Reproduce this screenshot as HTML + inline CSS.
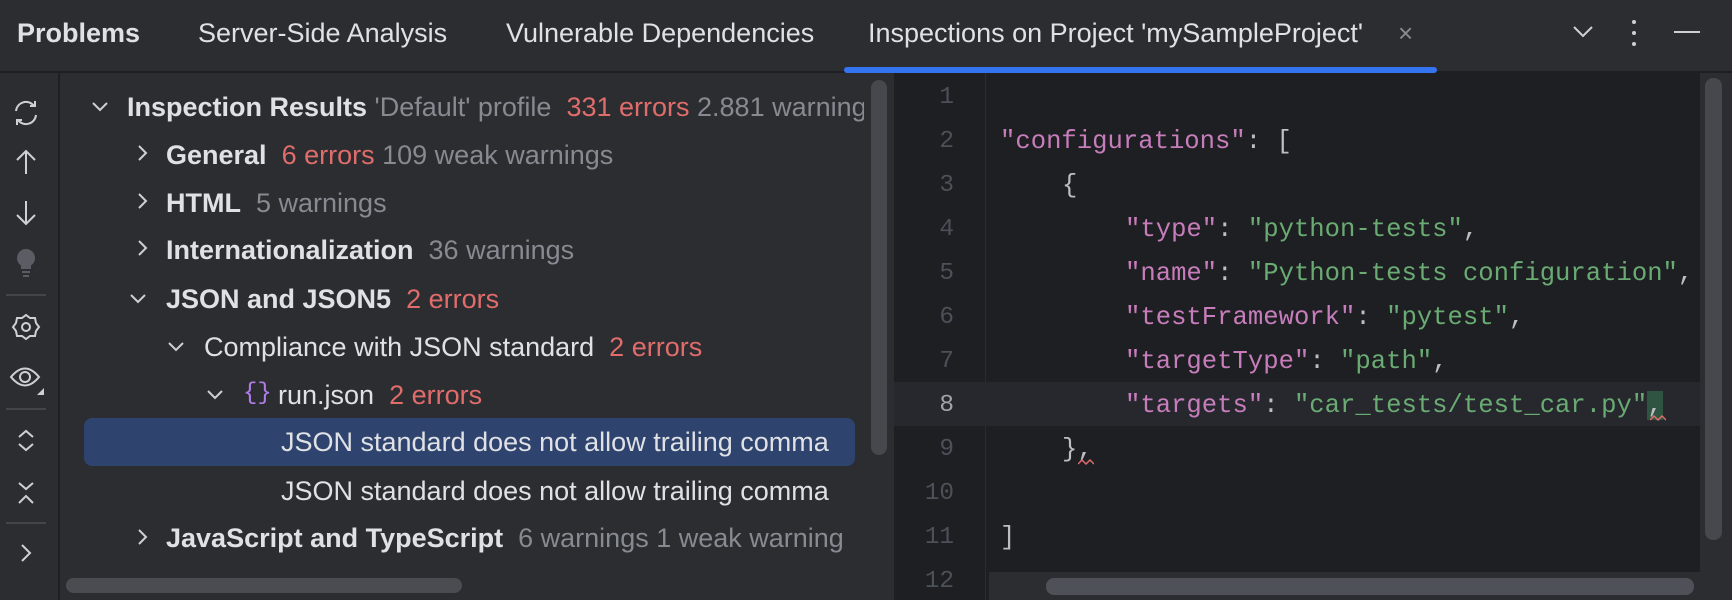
<!DOCTYPE html>
<html><head><meta charset="utf-8"><style>
*{margin:0;padding:0;box-sizing:border-box}
body{width:1732px;height:600px;background:#2b2d30;position:relative;overflow:hidden;font-family:"Liberation Sans",sans-serif;font-size:27px;color:#dfe1e5}
.a{position:absolute;white-space:nowrap}
.tab{top:16px;line-height:34px}
.row{line-height:34px}
.b{font-weight:bold}
.g{color:#868a91}
.r{color:#e06c6c}
.code{font-family:"Liberation Mono",monospace;font-size:25.6px;line-height:34px;color:#bcbec4}
.k{color:#c77dbb}
.s{color:#6aab73}
.ln{font-family:"Liberation Mono",monospace;font-size:24.4px;line-height:34px;color:#4b5059;width:60px;text-align:right;left:894px}
svg{position:absolute}
</style></head><body>
<!-- tab bar -->
<div class="a tab b" style="left:17px">Problems</div>
<div class="a tab" style="left:198px">Server-Side Analysis</div>
<div class="a tab" style="left:506px">Vulnerable Dependencies</div>
<div class="a tab" style="left:868px">Inspections on Project 'mySampleProject'</div>
<div class="a" style="left:1398px;top:16px;line-height:34px;color:#868a91;font-size:26px">×</div>
<svg style="left:1572px;top:24px" width="22" height="16"><path d="M2 3 L11 12 L20 3" stroke="#ced0d6" stroke-width="2" fill="none"/></svg>
<div class="a" style="left:1632px;top:20px;width:4px;height:4px;border-radius:2px;background:#ced0d6"></div>
<div class="a" style="left:1632px;top:31px;width:4px;height:4px;border-radius:2px;background:#ced0d6"></div>
<div class="a" style="left:1632px;top:42px;width:4px;height:4px;border-radius:2px;background:#ced0d6"></div>
<div class="a" style="left:1674px;top:31px;width:26px;height:2px;background:#ced0d6"></div>
<div class="a" style="left:0;top:71px;width:1732px;height:2px;background:#1e1f22"></div>
<div class="a" style="left:844px;top:67px;width:593px;height:6px;border-radius:3px;background:#3574f0"></div>

<!-- left toolbar -->
<div class="a" style="left:58px;top:73px;width:2px;height:527px;background:#1e1f22"></div>
<svg style="left:10px;top:97px" width="32" height="32" fill="none" stroke="#ced0d6" stroke-width="2"><path d="M6 14 A10 10 0 0 1 24 9"/><path d="M20 9 L25 9 L25 4"/><path d="M26 18 A10 10 0 0 1 8 23"/><path d="M12 23 L7 23 L7 28"/></svg>
<svg style="left:14px;top:148px" width="24" height="28" fill="none" stroke="#ced0d6" stroke-width="2"><path d="M12 26 L12 3 M3 12 L12 3 L21 12"/></svg>
<svg style="left:14px;top:199px" width="24" height="28" fill="none" stroke="#ced0d6" stroke-width="2"><path d="M12 2 L12 25 M3 16 L12 25 L21 16"/></svg>
<svg style="left:14px;top:248px" width="24" height="30"><circle cx="12" cy="10" r="9" fill="#5a5d63"/><rect x="7" y="17" width="10" height="4" fill="#5a5d63"/><rect x="8" y="23" width="8" height="2" fill="#5a5d63"/><rect x="9" y="27" width="6" height="2" fill="#5a5d63"/></svg>
<div class="a" style="left:6px;top:294px;width:40px;height:2px;background:#43454a"></div>
<svg style="left:11px;top:312px" width="30" height="30" fill="none" stroke="#ced0d6" stroke-width="2"><path d="M15 3 L19 6 L24 6 L25 11 L28 15 L25 19 L24 24 L19 24 L15 27 L11 24 L6 24 L5 19 L2 15 L5 11 L6 6 L11 6 Z"/><circle cx="15" cy="15" r="4"/></svg>
<svg style="left:9px;top:364px" width="36" height="32" fill="none" stroke="#ced0d6" stroke-width="2"><path d="M2 13 Q16 -4 30 13 Q16 30 2 13 Z"/><circle cx="16" cy="13" r="5"/><path d="M35 24 L35 31 L28 31 Z" fill="#ced0d6" stroke="none"/></svg>
<div class="a" style="left:6px;top:408px;width:40px;height:2px;background:#43454a"></div>
<svg style="left:16px;top:428px" width="20" height="26" fill="none" stroke="#ced0d6" stroke-width="2"><path d="M3 9 L10 3 L17 9 M3 16 L10 22 L17 16"/></svg>
<svg style="left:16px;top:480px" width="20" height="26" fill="none" stroke="#ced0d6" stroke-width="2"><path d="M3 3 L10 9 L17 3 M3 23 L10 16 L17 23"/></svg>
<div class="a" style="left:6px;top:522px;width:40px;height:2px;background:#43454a"></div>
<svg style="left:19px;top:542px" width="14" height="22" fill="none" stroke="#ced0d6" stroke-width="2"><path d="M3 3 L11 11 L3 19"/></svg>

<!-- tree -->
<div class="a" style="left:84px;top:418px;width:771px;height:48px;border-radius:8px;background:#2e436e"></div>
<div class="a" style="left:60px;top:73px;width:804px;height:527px;overflow:hidden">
<svg style="left:31px;top:27px" width="18" height="14" fill="none" stroke="#ced0d6" stroke-width="2"><path d="M2 3 L9 10 L16 3"/></svg>
<div class="a row" style="left:67px;top:17px"><span class="b">Inspection Results</span><span class="g"> 'Default' profile&nbsp; </span><span class="r">331 errors</span><span class="g"> 2.881 warnings</span></div>
</div>
<svg style="left:136px;top:144px" width="14" height="20" fill="none" stroke="#ced0d6" stroke-width="2"><path d="M3 2 L10 9 L3 16"/></svg>
<div class="a row" style="left:166px;top:138px"><span class="b">General</span>&nbsp; <span class="r">6 errors</span> <span class="g">109 weak warnings</span></div>
<svg style="left:136px;top:192px" width="14" height="20" fill="none" stroke="#ced0d6" stroke-width="2"><path d="M3 2 L10 9 L3 16"/></svg>
<div class="a row" style="left:166px;top:186px"><span class="b">HTML</span>&nbsp; <span class="g">5 warnings</span></div>
<svg style="left:136px;top:239px" width="14" height="20" fill="none" stroke="#ced0d6" stroke-width="2"><path d="M3 2 L10 9 L3 16"/></svg>
<div class="a row" style="left:166px;top:233px"><span class="b">Internationalization</span>&nbsp; <span class="g">36 warnings</span></div>
<svg style="left:129px;top:292px" width="18" height="14" fill="none" stroke="#ced0d6" stroke-width="2"><path d="M2 3 L9 10 L16 3"/></svg>
<div class="a row" style="left:166px;top:282px"><span class="b">JSON and JSON5</span>&nbsp; <span class="r">2 errors</span></div>
<svg style="left:167px;top:340px" width="18" height="14" fill="none" stroke="#ced0d6" stroke-width="2"><path d="M2 3 L9 10 L16 3"/></svg>
<div class="a row" style="left:204px;top:330px">Compliance with JSON standard&nbsp; <span class="r">2 errors</span></div>
<svg style="left:206px;top:388px" width="18" height="14" fill="none" stroke="#ced0d6" stroke-width="2"><path d="M2 3 L9 10 L16 3"/></svg>
<div class="a row" style="left:243px;top:377px;color:#b07ce8;font-family:'Liberation Mono',monospace;font-size:24px">{}</div>
<div class="a row" style="left:278px;top:378px">run.json&nbsp; <span class="r">2 errors</span></div>
<div class="a row" style="left:281px;top:425px">JSON standard does not allow trailing comma</div>
<div class="a row" style="left:281px;top:474px">JSON standard does not allow trailing comma</div>
<svg style="left:136px;top:528px" width="14" height="20" fill="none" stroke="#ced0d6" stroke-width="2"><path d="M3 2 L10 9 L3 16"/></svg>
<div class="a row" style="left:166px;top:521px"><span class="b">JavaScript and TypeScript</span>&nbsp; <span class="g">6 warnings 1 weak warning</span></div>
<div class="a" style="left:871px;top:80px;width:16px;height:375px;border-radius:8px;background:#46484d"></div>
<div class="a" style="left:66px;top:578px;width:396px;height:15px;border-radius:8px;background:#4a4c51"></div>

<!-- editor -->
<div class="a" style="left:894px;top:73px;width:838px;height:527px;background:#1e1f22"></div>
<div class="a" style="left:985px;top:73px;width:1px;height:527px;background:#2b2d30"></div>
<div class="a" style="left:894px;top:382px;width:806px;height:44px;background:#26282e"></div>
<div class="a ln" style="top:81px">1</div>
<div class="a ln" style="top:125px">2</div>
<div class="a ln" style="top:169px">3</div>
<div class="a ln" style="top:213px">4</div>
<div class="a ln" style="top:257px">5</div>
<div class="a ln" style="top:301px">6</div>
<div class="a ln" style="top:345px">7</div>
<div class="a ln" style="top:389px;color:#a1a3ab">8</div>
<div class="a ln" style="top:433px">9</div>
<div class="a ln" style="top:477px">10</div>
<div class="a ln" style="top:521px">11</div>
<div class="a ln" style="top:565px">12</div>
<div class="a code" style="left:1000px;top:125px"><span class="k">"configurations"</span>: [</div>
<div class="a code" style="left:1062px;top:169px">{</div>
<div class="a code" style="left:1125px;top:213px"><span class="k">"type"</span>: <span class="s">"python-tests"</span>,</div>
<div class="a code" style="left:1125px;top:257px"><span class="k">"name"</span>: <span class="s">"Python-tests configuration"</span>,</div>
<div class="a code" style="left:1125px;top:301px"><span class="k">"testFramework"</span>: <span class="s">"pytest"</span>,</div>
<div class="a code" style="left:1125px;top:345px"><span class="k">"targetType"</span>: <span class="s">"path"</span>,</div>
<div class="a code" style="left:1125px;top:389px"><span class="k">"targets"</span>: <span class="s">"car_tests/test_car.py"</span><span style="background:#2f5441">,</span></div>
<div class="a code" style="left:1062px;top:433px">},</div>
<svg style="left:1078px;top:458px" width="16" height="8" fill="none" stroke="#e06c6c" stroke-width="1.5"><path d="M0 6 L4 2 L8 6 L12 2 L16 6"/></svg>
<svg style="left:1650px;top:414px" width="16" height="8" fill="none" stroke="#e06c6c" stroke-width="1.5"><path d="M0 6 L4 2 L8 6 L12 2 L16 6"/></svg>
<div class="a code" style="left:1000px;top:521px">]</div>
<div class="a" style="left:1700px;top:73px;width:32px;height:527px;background:#2b2d30"></div>
<div class="a" style="left:1705px;top:78px;width:17px;height:462px;border-radius:8px;background:#46484d"></div>
<div class="a" style="left:989px;top:572px;width:711px;height:28px;background:#2b2d30"></div>
<div class="a" style="left:1046px;top:578px;width:648px;height:17px;border-radius:8px;background:#4e5157"></div>
</body></html>
